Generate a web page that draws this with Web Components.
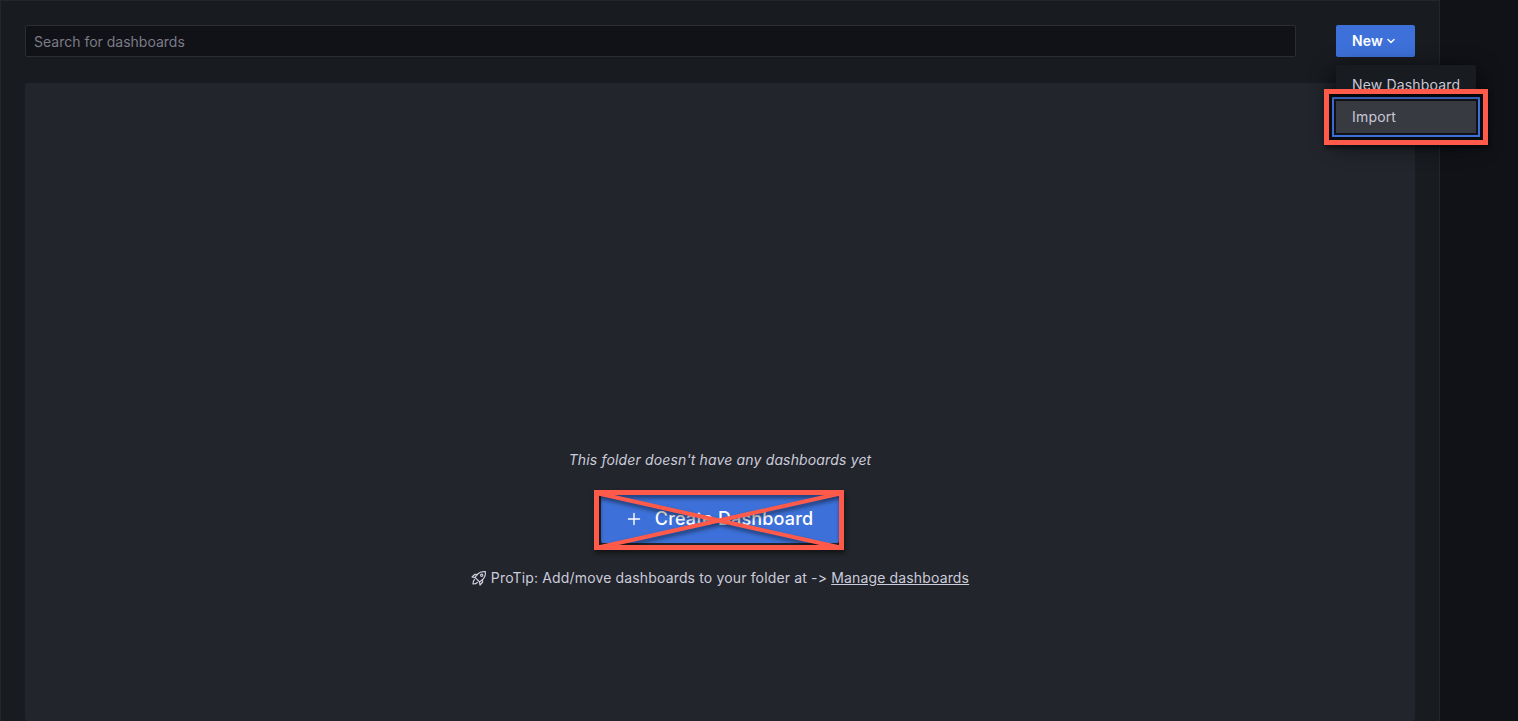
<!DOCTYPE html>
<html lang="en">
<head>
<meta charset="utf-8">
<title>Dashboards</title>
<style>
  html, body { margin: 0; min-height: 100vh; background: #111217; }
  body {
    font: 14px/22px Inter, "Liberation Sans", sans-serif;
    letter-spacing: 0.01071em;
    color: #ccccdc;
    display: flex;
  }
</style>
</head>
<body>
<dashboard-panel>
  <search-field slot="toolbar" label="Search for dashboards"></search-field>
  <new-menu slot="toolbar"></new-menu>
  <empty-state></empty-state>
</dashboard-panel>

<script>
const define = (name, html, setup) => {
  const template = document.createElement('template');
  template.innerHTML = '<style>*{box-sizing:border-box}:host{box-sizing:border-box}button,input{font:inherit;letter-spacing:inherit}</style>' + html;
  customElements.define(name, class extends HTMLElement {
    constructor() {
      super();
      this.attachShadow({ mode: 'open' }).append(template.content.cloneNode(true));
    }
    connectedCallback() { if (setup) setup(this, this.shadowRoot); }
  });
};

define('dashboard-panel', `
  <style>
    :host {
      display: flex; flex-direction: column; flex: 1; min-width: 0;
      min-height: 100vh; margin-right: 78px; padding: 24px 24px 0;
      background: #181b1f; border: 1px solid #24262b; border-bottom: 0;
    }
    header { display: flex; gap: 40px; margin-bottom: 26px; }
    main { flex: 1; display: flex; }
  </style>
  <header><slot name="toolbar"></slot></header>
  <main><slot></slot></main>`);

define('search-field', `
  <style>
    :host { display: block; flex: 1; min-width: 0; }
    input {
      display: block; width: 100%; height: 32px; padding: 0 8px;
      background: #111217; color: #ccccdc; letter-spacing: normal;
      border: 1px solid #2c2d33; border-radius: 2px; outline: 0;
    }
    input::placeholder { color: #7b7c88; opacity: 1; }
  </style>
  <input type="text">`, (host, root) => {
    const input = root.querySelector('input');
    input.placeholder = host.getAttribute('label');
    input.setAttribute('aria-label', host.getAttribute('label'));
  });

define('highlight-frame', `
  <style>
    :host { display: block; position: relative; }
    .frame {
      position: absolute; inset: var(--frame-inset, -12px); pointer-events: none;
      border: 5px solid #ff5a4a;
      filter: drop-shadow(1px 3px 2px #00000080);
    }
    svg { position: absolute; inset: -5px; width: calc(100% + 10px); height: calc(100% + 10px); display: none; }
    :host([crossed]) svg { display: block; }
    line { stroke: #ff5a4a; stroke-width: 4; vector-effect: non-scaling-stroke; }
  </style>
  <slot></slot>
  <div class="frame">
    <svg viewBox="0 0 250 60" preserveAspectRatio="none" aria-hidden="true">
      <line x1="2" y1="3" x2="248" y2="58"/><line x1="2" y1="58" x2="248" y2="3"/>
    </svg>
  </div>`);

define('new-menu', `
  <style>
    :host { display: block; position: relative; }
    .trigger {
      display: flex; align-items: center; gap: 1px; height: 32px; padding: 0 17px 0 16px;
      border: 0; border-radius: 2px; background: #3d71d9; color: #fff; font-weight: 600;
    }
    .menu {
      position: absolute; top: 40px; left: 0; padding-top: 4px;
      background: #181b1f; border-radius: 2px; box-shadow: 0 8px 24px #010409;
      z-index: 1;
    }
    .item {
      display: block; width: 100%; height: 32px; padding: 0 16px; border: 0;
      background: none; color: #c8c8d8; text-align: left; white-space: nowrap;
    }
    .item.active { background: #383a41; box-shadow: 0 0 0 2px #111217, 0 0 0 4px #3d71d9, 0 0 0 8px #0b0c10; }
  </style>
  <button class="trigger" aria-haspopup="menu" aria-expanded="true">New
    <svg width="14" height="14" viewBox="0 0 14 14" fill="none" stroke="#fff" stroke-width="1.4" stroke-linecap="round" stroke-linejoin="round" aria-hidden="true"><path d="M4 5.500l3 3 3-3"/></svg>
  </button>
  <div class="menu" role="menu">
    <button class="item" role="menuitem">New Dashboard</button>
    <highlight-frame><button class="item active" role="menuitem">Import</button></highlight-frame>
  </div>`);

define('empty-state', `
  <style>
    :host {
      flex: 1; display: flex; flex-direction: column; align-items: center;
      padding-top: 366px; background: #22252b; border-radius: 2px;
    }
    em { margin-bottom: 24px; }
    highlight-frame { --frame-inset: -5px -5px -7px -7px; margin-bottom: 24px; }
    .create {
      display: flex; align-items: center; gap: 12px; height: 48px; padding: 0 26px 0 24px;
      border: 0; border-radius: 2px; background: #3d71d9; color: #fff;
      font-size: 18px; font-weight: 500;
    }
    .tip { display: flex; align-items: center; gap: 4px; }
    a { color: inherit; text-decoration: underline; }
  </style>
  <em>This folder doesn't have any dashboards yet</em>
  <highlight-frame crossed>
    <button class="create">
      <svg width="18" height="18" viewBox="0 0 18 18" stroke="#fff" stroke-width="1.4" stroke-linecap="round" aria-hidden="true"><path d="M9 3.500v11M3.500 9h11"/></svg>
      Create Dashboard
    </button>
  </highlight-frame>
  <div class="tip">
    <svg width="16" height="16" viewBox="0 0 16 16" fill="none" stroke="#ccccdc" stroke-width="1.2" stroke-linejoin="round" stroke-linecap="round" aria-hidden="true">
      <path d="M14.300 1.700C11.200 1.200 8.600 2.100 6.700 4L4 7.400l4.600 4.600 3.300-2.700c1.900-1.900 2.900-4.500 2.400-7.600z"/>
      <path d="M6.200 4.600 4 4.300 1 7l3 .6M11.400 9.800l.3 2.200L9 15l-.6-3"/>
      <path d="M3.600 9.600C2.300 10.400 2 11.900 2 14c2.100 0 3.600-.3 4.400-1.600"/>
      <circle cx="10.700" cy="5.300" r="1.100"/>
    </svg>
    <span>ProTip: Add/move dashboards to your folder at -&gt; <a href="#dashboards">Manage dashboards</a></span>
  </div>`);
</script>
</body>
</html>
